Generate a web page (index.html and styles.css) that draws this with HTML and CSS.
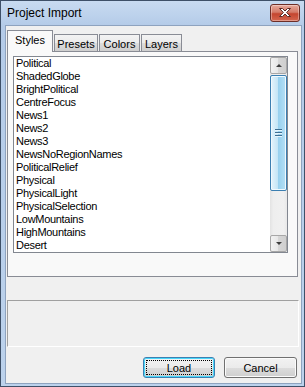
FILE: index.html
```html
<!DOCTYPE html>
<html lang="en">

<head>
  <meta charset="UTF-8" />
  <title>Project Import</title>
  <link rel="stylesheet" href="styles.css">
</head>

<body>
  <div class="window">
    <div class="titlebar">
      <span class="title">Project Import</span>
      <div class="close-btn">
        <svg width="16" height="11" viewBox="0 0 16 11">
          <path d="M2.5 1.5 L5.5 1.5 L8 4 L10.5 1.5 L13.5 1.5 L9.6 5.5 L13.5 9.5 L10.5 9.5 L8 7 L5.5 9.5 L2.5 9.5 L6.4 5.5 Z" fill="#fff" stroke="#5a2a25" stroke-width="1" stroke-linejoin="round" />
        </svg>
      </div>
    </div>

    <div class="client">
      <!-- Tabs -->
      <div class="tabs">
        <div class="tab active">Styles</div>
        <div class="tab w44">Presets</div>
        <div class="tab w41">Colors</div>
        <div class="tab w41">Layers</div>
      </div>

      <div class="panel">
        <div class="listbox">
          <ul class="items">
            <li>Political</li>
            <li>ShadedGlobe</li>
            <li>BrightPolitical</li>
            <li>CentreFocus</li>
            <li>News1</li>
            <li>News2</li>
            <li>News3</li>
            <li>NewsNoRegionNames</li>
            <li>PoliticalRelief</li>
            <li>Physical</li>
            <li>PhysicalLight</li>
            <li>PhysicalSelection</li>
            <li>LowMountains</li>
            <li>HighMountains</li>
            <li>Desert</li>
          </ul>
          <div class="scrollbar">
            <div class="sb-btn"><span class="arrow up"></span></div>
            <div class="sb-track">
              <div class="thumb">
                <span class="grip"></span>
                <span class="grip"></span>
                <span class="grip"></span>
              </div>
            </div>
            <div class="sb-btn"><span class="arrow down"></span></div>
          </div>
        </div>
      </div>

      <div class="status-box"></div>

      <div class="buttons">
        <button class="btn default"><span class="focus">Load</span></button>
        <button class="btn">Cancel</button>
      </div>
    </div>
  </div>
</body>

</html>
```

FILE: styles.css
```css
/* General */
body {
  margin: 0;
  padding: 0;
  font-family: "Liberation Sans", Arial, sans-serif;
  font-size: 11px;
  color: #000;
}

/* Window frame */
.window {
  width: 305px;
  height: 387px;
  box-sizing: border-box;
  border: 1px solid #3e5068;
  background: linear-gradient(#c8dbf1, #b4cbe8 25px, #bcd2ec);
  display: flex;
  flex-direction: column;
}

.titlebar {
  height: 24px;
  display: flex;
  align-items: center;
  justify-content: space-between;
  padding: 0 4px 0 6px;
}

.title {
  font-size: 12px;
  color: #000;
}

.close-btn {
  width: 28px;
  height: 16px;
  margin-top: -1px;
  border: 1px solid #6d2e27;
  border-radius: 3px;
  background: linear-gradient(#e8aa9c, #d47a68 45%, #c4452f 55%, #d4664f);
  display: flex;
  align-items: center;
  justify-content: center;
  box-shadow: inset 0 0 0 1px rgba(255, 255, 255, 0.35);
}

.client {
  flex: 1;
  margin: 0 2px 2px 4px;
  border: 1px solid #8ea3bf;
  background: #f0f0f0;
  padding: 4px 3px 0 1px;
  display: flex;
  flex-direction: column;
}

/* Tabs */
.tabs {
  display: flex;
  align-items: flex-end;
  height: 21px;
  position: relative;
  z-index: 1;
}

.tab {
  height: 17px;
  box-sizing: border-box;
  border: 1px solid #898c95;
  border-bottom: none;
  background: linear-gradient(#f3f3f3, #ebebeb 50%, #dddddd 50%, #cfcfcf);
  display: flex;
  align-items: center;
  justify-content: center;
  padding-top: 1px;
  margin-right: 1px;
}

.tab.active {
  width: 46px;
  height: 22px;
  margin-bottom: -1px;
  background: #f9f9f9;
  padding-top: 0;
  padding-bottom: 3px;
}

.w44 {
  width: 44px;
}

.w41 {
  width: 41px;
}

/* Panel */
.panel {
  height: 226px;
  box-sizing: border-box;
  border: 1px solid #898c95;
  background: #f9f9f9;
  padding: 4px 9px 0 5px;
}

.listbox {
  height: 197px;
  box-sizing: border-box;
  border: 1px solid #828790;
  background: #fff;
  display: flex;
  overflow: hidden;
}

.items {
  flex: 1;
  list-style: none;
  margin: 0;
  padding: 0 0 0 2px;
}

.items li {
  height: 13px;
  line-height: 13px;
  white-space: nowrap;
  letter-spacing: -0.3px;
}

/* Scrollbar */
.scrollbar {
  width: 17px;
  display: flex;
  flex-direction: column;
  background: linear-gradient(90deg, #e3e3e3, #eeeeee 20%, #f0f0f0 80%, #e8e8e8);
}

.sb-btn {
  height: 17px;
  box-sizing: border-box;
  border: 1px solid #a7a7a7;
  border-radius: 2px;
  background: linear-gradient(90deg, #f2f2f2, #e6e6e6 50%, #d6d6d6 50%, #cfcfcf);
  display: flex;
  align-items: center;
  justify-content: center;
}

.arrow {
  width: 0;
  height: 0;
  border-left: 3px solid transparent;
  border-right: 3px solid transparent;
}

.arrow.up {
  border-bottom: 3px solid #3c3c3c;
}

.arrow.down {
  border-top: 3px solid #3c3c3c;
}

.sb-track {
  flex: 1;
  padding-top: 1px;
}

.thumb {
  height: 116px;
  box-sizing: border-box;
  border: 1px solid #3c7fb1;
  border-radius: 2px;
  background: linear-gradient(90deg, #e5f4fc, #c4e5f6 45%, #98d1ef 50%, #b6e0f5);
  display: flex;
  flex-direction: column;
  align-items: center;
  justify-content: center;
  gap: 1px;
  box-shadow: inset 0 0 0 1px #f0f9fe;
}

.grip {
  width: 7px;
  height: 1px;
  background: #3e6f93;
  border-bottom: 1px solid #e6f5fd;
}

/* Status box */
.status-box {
  height: 47px;
  box-sizing: border-box;
  margin-top: 23px;
  margin-right: -1px;
  border: 1px solid;
  border-color: #a0a0a0 #fff #fff #a0a0a0;
}

/* Buttons */
.buttons {
  display: flex;
  justify-content: flex-end;
  gap: 9px;
  margin-top: 10px;
  margin-right: 1px;
}

.btn {
  width: 73px;
  height: 21px;
  box-sizing: border-box;
  border: 1px solid #707070;
  border-radius: 3px;
  background: linear-gradient(#f2f2f2, #ebebeb 50%, #dddddd 50%, #cfcfcf);
  font-family: "Liberation Sans", Arial, sans-serif;
  font-size: 11px;
  color: #000;
  padding: 0;
  box-shadow: inset 0 0 0 1px #fbfbfb;
}

.btn.default {
  width: 72px;
  border-color: #3c7fb1;
  box-shadow: inset 0 0 0 1px #48d7fb;
  padding: 2px;
}

.focus {
  display: flex;
  align-items: center;
  justify-content: center;
  height: 100%;
  box-sizing: border-box;
  border: 1px dotted #000;
}
```
